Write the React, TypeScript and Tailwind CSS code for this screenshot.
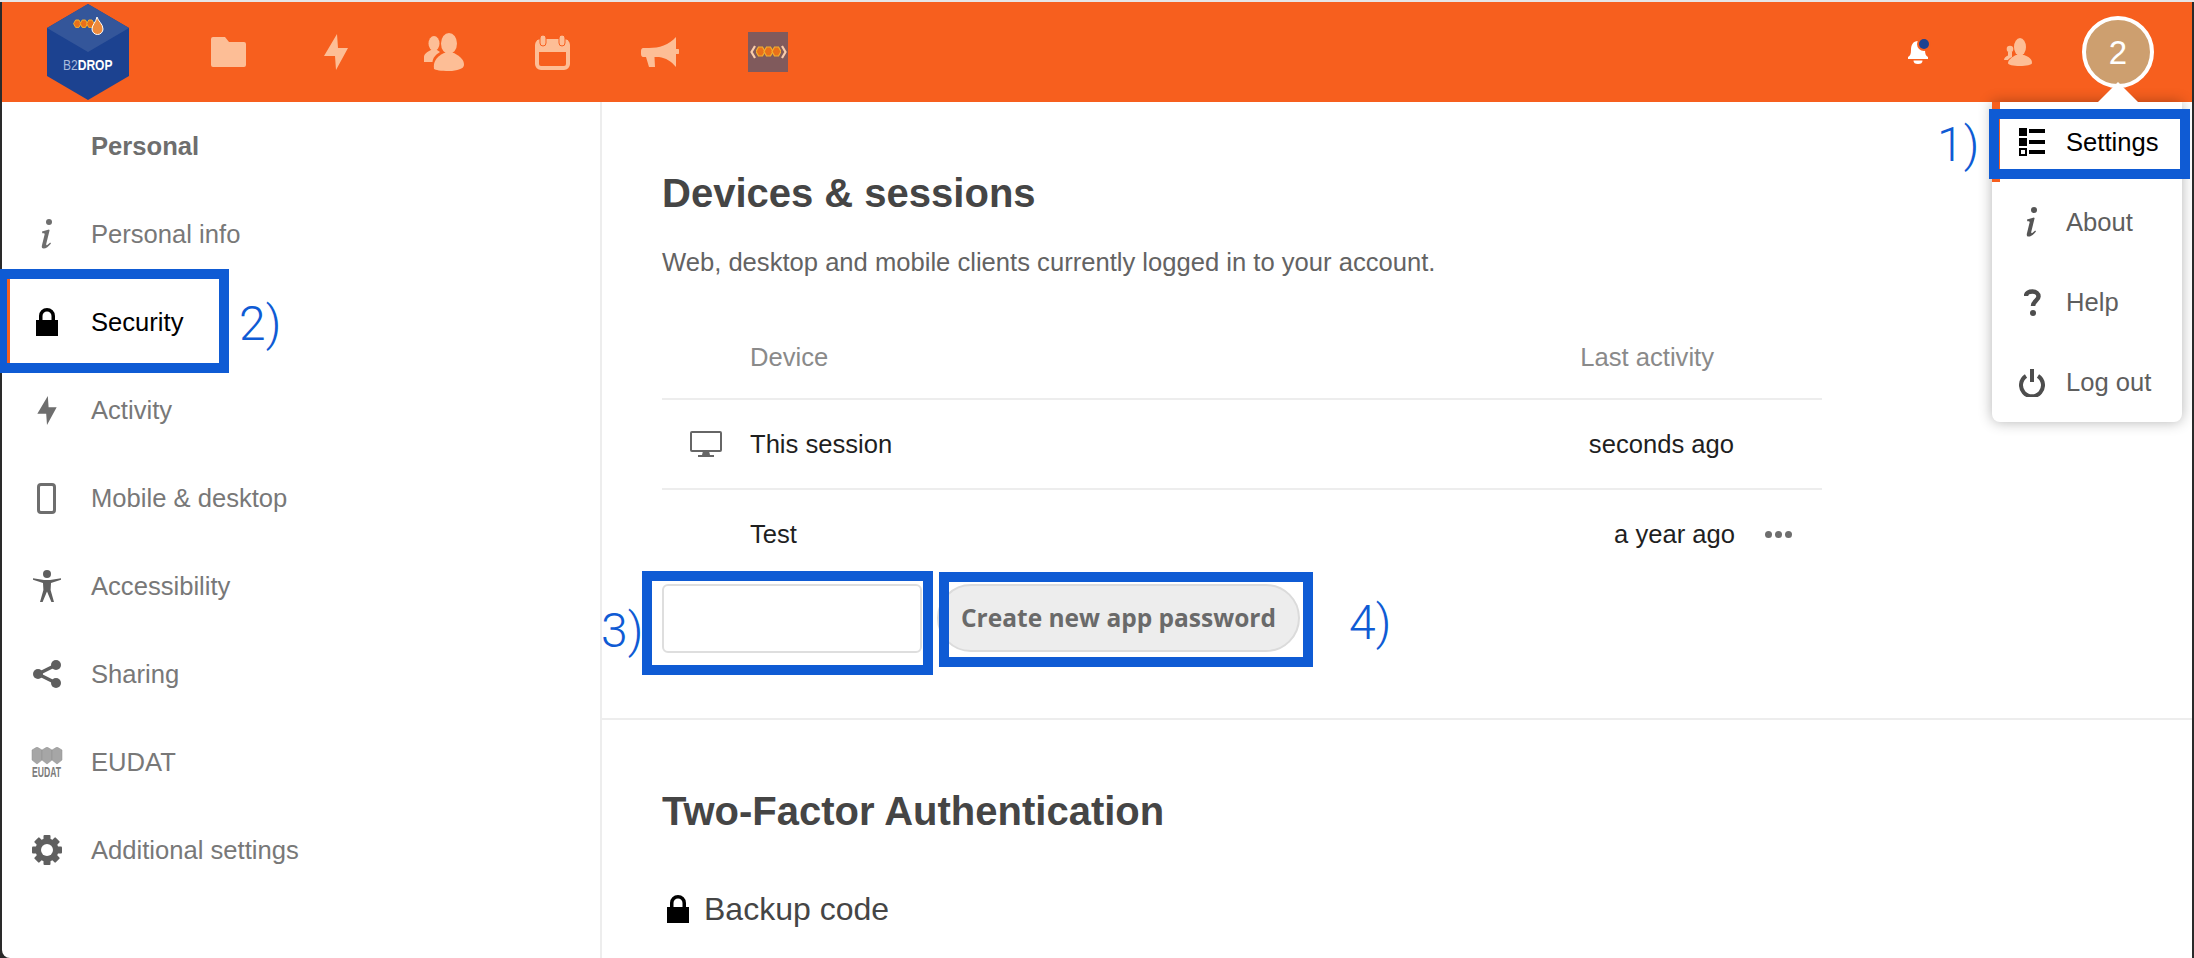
import React from "react";

const Info = ({ c = "#6e6e6e" }: { c?: string }) => (
  <svg width="12" height="30" viewBox="0 0 12 30"><circle cx="8" cy="3" r="3" fill={c} /><path d="M1 12.5 L8 10.5 L8.6 11.2 L5.2 25 C5 26.2 5.8 26.5 6.6 25.8 L9.2 23.5 L10 24.5 C7.5 27.6 5 29.6 2.7 29.6 C1 29.6 .5 28.3 .9 26.6 L3.6 15.6 C3.9 14.3 3 14 1.3 14.2 Z" fill={c} /></svg>
);
const Lock = ({ w = 22, h = 28 }: { w?: number; h?: number }) => (
  <svg width={w} height={h} viewBox="0 0 22 28"><path d="M0 12h3V8a8 8 0 0116 0v4h3v16H0z M6.5 12h9V8a4.5 4.5 0 00-9 0z" fill="#000" fillRule="evenodd" /></svg>
);
const Bolt = ({ c, w, h }: { c: string; w: number; h: number }) => (
  <svg width={w} height={h} viewBox="0 0 24 36"><path d="M13 0 L0 22 H11 L12 36 L24 14 H14 Z" fill={c} /></svg>
);
const Phone = () => (
  <svg width="19" height="31" viewBox="0 0 19 31"><rect x="1.5" y="1.5" width="16" height="28" rx="2.5" fill="none" stroke="#6e6e6e" strokeWidth="3" /></svg>
);
const Person = () => (
  <svg width="28" height="32" viewBox="0 0 28 32"><circle cx="14" cy="4" r="4" fill="#5f5f5f" /><path d="M0 8.2 L11 10 H17 L28 8.2 V9.8 L18 13 L17.6 20 L21 32 H18.4 L14 21.5 L9.6 32 H7 L10.4 20 L10 13 L0 9.8 Z" fill="#5f5f5f" /></svg>
);
const Share = () => (
  <svg width="28" height="28" viewBox="0 0 28 28"><path d="M23 5 L5 14 L23 23" fill="none" stroke="#5f5f5f" strokeWidth="3.5" /><circle cx="5" cy="14" r="5" fill="#5f5f5f" /><circle cx="23" cy="5" r="5" fill="#5f5f5f" /><circle cx="23" cy="23" r="5" fill="#5f5f5f" /></svg>
);
const Gear = () => (
  <svg width="30" height="30" viewBox="0 0 30 30"><g fill="#5f5f5f"><circle cx="15" cy="15" r="11.5" />{[0, 45, 90, 135, 180, 225, 270, 315].map((a) => (<rect key={a} x="11.5" y="0" width="7" height="6" rx="1" transform={`rotate(${a} 15 15)`} />))}</g><circle cx="15" cy="15" r="6" fill="#fff" /></svg>
);
const Comb = ({ x, y, s = 1 }: { x: number; y: number; s?: number }) => (
  <g transform={`translate(${x} ${y}) scale(${s})`}>
    {[0, 8, 16].map((d) => (<path key={d} d={`M${d + 2} 0 h4 l2.5 4.5 l-2.5 4.5 h-4 l-2.5 -4.5 z`} fill="#e9701a" stroke="#f2b02f" strokeWidth="1.2" />))}
  </g>
);
const EudatIcon = () => (
  <svg width="32" height="34" viewBox="0 0 32 34" className="mt-[4px]">
    {[1, 11, 21].map((x) => (<path key={x} d={`M${x} 3 l5 -3 l5 3 v10 l-5 4 l-5 -4 z`} fill="#a6a6a6" stroke="#8c8c8c" strokeWidth=".5" />))}
    <text transform="translate(1 30) scale(1 1.6)" x="0" y="0" fontFamily="Liberation Sans, sans-serif" fontSize="8.6" fontWeight="700" fill="#7c7c7c">EUDAT</text>
  </svg>
);
const Logo = () => (
  <div className="relative w-[82px] h-[96px]">
    <svg width="82" height="96" viewBox="0 0 82 96" className="absolute inset-0">
      <path d="M41 0 L82 24 V72 L41 96 L0 72 V24 Z" fill="#1c4290" />
      <path d="M41 0 L82 24 L41 48 L0 24 Z" fill="#34569a" />
      <Comb x={27} y={16} s={0.82} />
      <path d="M50 13 C51 17 56 20 56 25 A 5.500 5.500 0 0 1 45 25 C45 21 49 18 50 13 Z" fill="#ee8a3c" stroke="#fff" strokeWidth="1" />
    </svg>
    <span className="absolute left-[16px] top-[51px] text-[14px] leading-[20px] whitespace-nowrap origin-left scale-x-[0.86] text-[#a9bbdc]">B2<span className="font-bold text-white">DROP</span></span>
  </div>
);
const Contacts = ({ c }: { c: string }) => (
  <svg width="40" height="38" viewBox="0 0 40 38" fill={c}>
    <ellipse cx="25" cy="10.500" rx="8" ry="10.500" />
    <path d="M10 36 C9 29 12 24 20 20 H30 C37 24 40 27 40 32 C40 35.500 33 38 25 38 C17 38 11 37 10 36 Z" />
    <ellipse cx="10" cy="10.500" rx="5.500" ry="7.500" />
    <path d="M0 29 V24 C0 21 3 19 7 17 H13 L16 19 C11 22 9 25 8.500 29 Z" />
  </svg>
);
const ContactsSmall = ({ c }: { c: string }) => (
  <svg width="28" height="28" viewBox="0 0 28 28" fill={c}>
    <ellipse cx="16" cy="9" rx="6" ry="9" />
    <path d="M4 25 C4 22 8 19 12 17 H20 C25 19 28 21 28 25 C28 27 22 28 16 28 C9 28 4 27 4 25 Z" />
    <circle cx="6" cy="11" r="3.300" />
    <path d="M4 14 H8 V19 C6 20 4.500 21 4 22 H0 C0 20 2 18 4 17.500 Z" />
  </svg>
);

const nav = [
  { label: "Personal info", icon: <Info /> },
  { label: "Security", icon: <Lock />, active: true },
  { label: "Activity", icon: <Bolt c="#6e6e6e" w={20} h={29} /> },
  { label: "Mobile & desktop", icon: <Phone /> },
  { label: "Accessibility", icon: <Person /> },
  { label: "Sharing", icon: <Share /> },
  { label: "EUDAT", icon: <EudatIcon /> },
  { label: "Additional settings", icon: <Gear /> },
];

const top = [
  <svg width="35" height="30" viewBox="0 0 35 30" fill="#fdbe96"><path d="M2 0h12l4 5h15a2 2 0 012 2v21a2 2 0 01-2 2H2a2 2 0 01-2-2V2a2 2 0 012-2z" /></svg>,
  <Bolt c="#fdbe96" w={24} h={36} />,
  <Contacts c="#fdbe96" />,
  <svg width="35" height="35" viewBox="0 0 35 35"><rect x="2" y="6" width="31" height="27" rx="4" fill="none" stroke="#fdbe96" strokeWidth="4" /><rect x="2" y="5" width="31" height="12" fill="#fdbe96" /><rect x="5" y="0" width="6" height="11" rx="3" fill="#fdbe96" stroke="#f75f1e" strokeWidth="1" /><rect x="24" y="0" width="6" height="11" rx="3" fill="#fdbe96" stroke="#f75f1e" strokeWidth="1" /></svg>,
  <svg width="38" height="30" viewBox="0 0 38 30" fill="#fdbe96"><path d="M3 11 H8 C18 11 28 8 35 0 V12 H37 A1.500 1.500 0 0 1 37 17 H35 V30 C30 24 25 21 18 20 H13.500 L14 30 H8 L5 20 H3 C0 20 0 18 0 15.500 C0 13 0 11 3 11 Z" /></svg>,
];

const Bracket = ({ d }: { d: string }) => (
  <svg width="6" height="14" viewBox="0 0 6 14"><path d={d} fill="none" stroke="#f9cdab" strokeWidth="2.200" /></svg>
);

const blue = "border-[#0f5bd4]";

export default function App() {
  return (
    <div className="relative w-[2194px] h-[958px] overflow-hidden bg-[#2a2a2a] font-['Liberation_Sans',sans-serif]">
      <div className="h-[2px] bg-[#e6e6e6]" />
      <header className="h-[100px] mx-[2px] bg-[#f75f1e] flex items-center">
        <div className="ml-[45px] w-[127px]"><Logo /></div>
        {top.map((t, i) => (
          <div key={i} className="w-[108px] flex justify-center">{t}</div>
        ))}
        <div className="w-[108px] flex justify-center">
          <div className="w-[40px] h-[40px] bg-[#805a5c] flex items-center justify-center">
            <Bracket d="M5 1 L1.500 7 L5 13" />
            <svg width="25" height="12" viewBox="0 0 25 12"><Comb x={0.5} y={1} s={1} /></svg>
            <Bracket d="M1 1 L4.500 7 L1 13" />
          </div>
        </div>
        <div className="flex-1" />
        <div className="relative w-[100px] flex justify-center">
          <svg width="20" height="23" viewBox="0 0 20 23" fill="#fff"><path d="M10 0 C15 0 17 4 17 9 C17 13 18 15 20 16 V18 H0 V16 C2 15 3 13 3 9 C3 4 5 0 10 0 Z" /><path d="M5.500 19.500 H14.500 A4.500 3.500 0 0 1 5.500 19.500 Z" /></svg>
          <span className="absolute left-[51px] -top-[2px] w-[10px] h-[10px] rounded-full bg-[#1c4290] ring-2 ring-[#f75f1e]" />
        </div>
        <div className="w-[100px] flex justify-center"><ContactsSmall c="#fdbe96" /></div>
        <div className="w-[72px] h-[72px] ml-[14px] mr-[38px] rounded-full bg-[#cd9f6f] border-[4px] border-white flex items-center justify-center text-white text-[33px] leading-none">2</div>
      </header>

      <div className="flex mx-[2px] h-[856px] bg-white rounded-bl-[8px]">
        <aside className="w-[600px] border-r-2 border-[#ededed] shrink-0">
          <div className="h-[88px] flex items-center pl-[89px] text-[25.6px] font-bold text-[#6e6e6e]">Personal</div>
          {nav.map((n) => (
            <div key={n.label} className={`h-[88px] flex items-center text-[25.6px] ${n.active ? "text-black border-l-[8px] border-[#f75f1e]" : "text-[#787878]"}`}>
              <div className={`${n.active ? "w-[81px] pr-[8px]" : "w-[89px]"} flex justify-center`}>{n.icon}</div>
              <span>{n.label}</span>
            </div>
          ))}
        </aside>

        <main className="flex-1">
          <section className="h-[618px] border-b-2 border-[#ededed] pl-[60px]">
            <h2 className="pt-[69px] text-[40px] leading-[44px] font-bold text-[#454545]">Devices &amp; sessions</h2>
            <p className="mt-[29px] text-[25.6px] leading-[36px] text-[#636363]">Web, desktop and mobile clients currently logged in to your account.</p>
            <div className="mt-[36px] w-[1160px] text-[25.6px]">
              <div className="h-[84px] flex items-center border-b-2 border-[#ededed] text-[#8a8a8a]">
                <span className="ml-[88px]">Device</span>
                <span className="ml-auto mr-[108px]">Last activity</span>
              </div>
              <div className="h-[90px] flex items-center border-b-2 border-[#ededed] text-[#1f1f1f]">
                <div className="w-[88px] flex justify-center">
                  <svg width="32" height="26" viewBox="0 0 32 26"><rect x="1" y="1" width="30" height="19" rx="1" fill="none" stroke="#666" strokeWidth="2" /><path d="M13 20 H19 L20 24 H24 V26 H8 V24 H12 Z" fill="#666" /></svg>
                </div>
                <span>This session</span>
                <span className="ml-auto mr-[88px]">seconds ago</span>
              </div>
              <div className="h-[88px] flex items-center text-[#1f1f1f]">
                <span className="ml-[88px]">Test</span>
                <span className="ml-auto">a year ago</span>
                <span className="ml-[30px] mr-[30px] flex gap-[3px]">
                  <i className="w-[7px] h-[7px] rounded-full bg-[#6e6e6e]" />
                  <i className="w-[7px] h-[7px] rounded-full bg-[#6e6e6e]" />
                  <i className="w-[7px] h-[7px] rounded-full bg-[#6e6e6e]" />
                </span>
              </div>
              <div className="flex gap-[15px] mt-[6px]">
                <div className="w-[260px] h-[69px] rounded-[6px] border-2 border-[#dedede] bg-white" />
                <button className="w-[363px] h-[68px] rounded-full border-2 border-[#dbdbdb] bg-[#ededed] text-[#6a6a6a] text-[24.5px] font-bold font-['Open_Sans',sans-serif]">Create new app password</button>
              </div>
            </div>
          </section>
          <section className="pl-[60px]">
            <h2 className="mt-[69px] text-[40px] leading-[44px] font-bold text-[#454545]">Two-Factor Authentication</h2>
            <div className="mt-[56px] flex items-center gap-[15px] pl-[5px] text-[32px] leading-[40px] text-[#454545]">
              <Lock />
              <span>Backup code</span>
            </div>
          </section>
        </main>
      </div>

      {/* open user menu */}
      <div className="absolute left-[1992px] top-[102px] w-[190px] h-[320px] bg-white rounded-b-[8px] shadow-[0_0_14px_rgba(0,0,0,0.3)] text-[25.6px] text-[#5e5e5e]">
        <div className="absolute left-[106px] -top-[20px] w-0 h-0 border-l-[20px] border-r-[20px] border-b-[20px] border-l-transparent border-r-transparent border-b-white" />
        <div className="relative h-[80px] flex items-center border-l-[8px] border-[#f75f1e] text-black">
          <div className="w-[66px] flex justify-center pr-[3px]">
            <svg width="26" height="28" viewBox="0 0 26 28"><rect width="8" height="8" /><rect y="10" width="8" height="8" /><rect x="1" y="21" width="6" height="6" fill="none" stroke="#000" strokeWidth="2" /><rect x="10" y="1" width="16" height="4" /><rect x="10" y="12" width="16" height="4" /><rect x="10" y="22" width="16" height="4" /></svg>
          </div>
          <span>Settings</span>
        </div>
        <div className="h-[80px] flex items-center"><div className="w-[74px] flex justify-center pl-[6px]"><Info c="#555" /></div><span>About</span></div>
        <div className="h-[80px] flex items-center"><div className="w-[74px] flex justify-center pl-[6px]">
          <svg width="17" height="27" viewBox="0 0 17 27"><path d="M2 7 C2 4 5 2.500 8.500 2.500 C12 2.500 14.500 4.500 14.500 7.500 C14.500 11.500 9 12 9 17" fill="none" stroke="#4d4d4d" strokeWidth="4.500" /><circle cx="9" cy="24" r="3" fill="#4d4d4d" /></svg>
        </div><span>Help</span></div>
        <div className="h-[80px] flex items-center"><div className="w-[74px] flex justify-center pl-[6px]">
          <svg width="26" height="29" viewBox="0 0 26 29"><path d="M7 8 A11 11 0 1 0 19 8" fill="none" stroke="#4d4d4d" strokeWidth="4" /><path d="M13 1 V14" stroke="#4d4d4d" strokeWidth="4" /></svg>
        </div><span>Log out</span></div>
      </div>

      {/* instruction annotations drawn over the screenshot */}
      <div className={`absolute left-[1989px] top-[109px] w-[201px] h-[70px] border-[10px] ${blue}`} />
      <div className={`absolute left-0 top-[269px] w-[229px] h-[104px] border-[10px] border-l-[7px] ${blue}`} />
      <div className={`absolute left-[642px] top-[571px] w-[291px] h-[104px] border-[10px] ${blue}`} />
      <div className={`absolute left-[939px] top-[572px] w-[374px] h-[95px] border-[10px] ${blue}`} />
      {[
        { t: "1)", cls: "left-[1937px] top-[117px]" },
        { t: "2)", cls: "left-[239px] top-[296px]" },
        { t: "3)", cls: "left-[601px] top-[603px]" },
        { t: "4)", cls: "left-[1349px] top-[595px]" },
      ].map((a) => (
        <span key={a.t} className={`absolute ${a.cls} text-[48px] leading-[56px] text-[#0f5bd4] font-['Roboto',sans-serif] font-light`}>{a.t}</span>
      ))}
    </div>
  );
}
